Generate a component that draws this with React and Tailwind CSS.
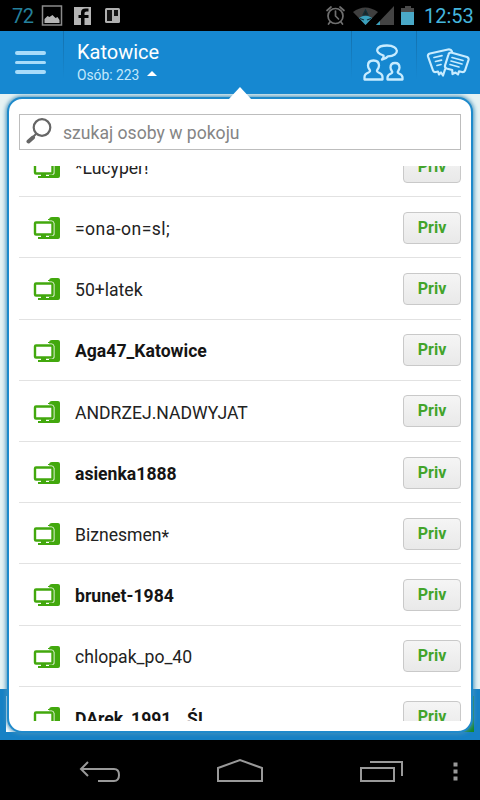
const people = [
  { name: "*Lucyper!" },
  { name: "=ona-on=sl;", wide: true },
  { name: "50+latek" },
  { name: "Aga47_Katowice", bold: true },
  { name: "ANDRZEJ.NADWYJAT" },
  { name: "asienka1888", bold: true },
  { name: "Biznesmen", starAfter: true },
  { name: "brunet-1984", bold: true },
  { name: "chlopak_po_40" },
  { name: "DArek_1991__ŚL", bold: true },
];

function StatusBar() {
  return (
    <div className="flex h-[31px] shrink-0 items-center bg-black pl-3 pr-[7px]">
      <span className="w-[29px] text-[20px] leading-[32px] tracking-[-0.500px] text-[#25809c]">72</span>
      <svg width="80" height="31" viewBox="0 0 80 31" fill="none">
        <rect x="1.500" y="6" width="19" height="19" stroke="#8b8b8b" strokeWidth="1.500" />
        <path d="M3.500 23v-4l3-3 2 1 3-2 3 3 2-1 2 3v3z" fill="#b5b5b5" />
        <rect x="33" y="7" width="17" height="18" fill="#b5b5b5" />
        <path d="M43.500 25v-7h4v-3h-4v-2q0-1.500 2-1.500h2v-3h-3q-4.500 0-4.500 4v2.500h-2.500v3H40v7z" fill="#050505" />
        <rect x="64" y="8" width="15" height="15" rx="1.500" fill="#b0b0b0" />
        <path d="M66 10h5v11h-5zM73 10h4v6h-4z" fill="#141414" />
      </svg>
      <svg className="ml-auto" width="92" height="31" viewBox="0 0 92 31" fill="none">
        <g stroke="#6f6f6f" strokeWidth="1.700" strokeLinecap="round">
          <circle cx="12.500" cy="16" r="7.500" />
          <path d="M12.500 11v5l3 3M4 10.500l4-3.500M21 10.500l-4-3.500M7 22l-1.500 2M18 22l1.500 2" />
        </g>
        <path d="M30 12q12-9 25 0L42.500 25z" fill="#3f3f3f" />
        <path d="M36 18q6.500-5 13 0L42.500 25z" fill="#3aa0bd" />
        <path d="M42.500 10l2.500 5h-5zM37 18.500l4 1.500M48 18.500l-4 1.500" fill="#222" stroke="#12303a" strokeWidth="1.200" />
        <path d="M71 6v19H53z" fill="#444" />
        <path d="M57 21v4h-4z" fill="#3aa0bd" />
        <path d="M82 6h6v2h3v17H78V8h4z" fill="#4a4a4a" />
        <path d="M78 12h13v13H78z" fill="#4aa9c8" />
      </svg>
      <span className="ml-[9px] w-[49px] text-[20px] leading-[32px] text-[#45b5dd]">12:53</span>
    </div>
  );
}

function Divider() {
  return <div className="h-12 w-px bg-gradient-to-b from-[#1370ac] to-[#1688d1]" />;
}

function Header() {
  return (
    <header className="flex h-[63px] shrink-0 bg-[#1688d1]">
      <div className="flex w-[63px] items-start pl-[15px] pt-5">
        <div className="flex w-[31px] flex-col gap-1.5">
          <span className="h-[3.500px] rounded-full bg-[#a8dcfa]" />
          <span className="h-[3.500px] rounded-full bg-[#a8dcfa]" />
          <span className="h-[3.500px] rounded-full bg-[#a8dcfa]" />
        </div>
      </div>
      <Divider />
      <div className="flex-1 pl-[13px] pt-[9px]">
        <h1 className="text-[20px] leading-6 text-white">Katowice</h1>
        <div className="flex items-center gap-2 text-[13.800px] leading-[22px] text-[#c3e8fc]">
          <span>Osób: 223</span>
          <span className="mb-1 border-x-[5px] border-b-[5px] border-x-transparent border-b-white" />
        </div>
      </div>
      <Divider />
      <svg className="w-16" height="63" viewBox="0 0 64 63" fill="none" stroke="#c8ecff" strokeWidth="2.300" strokeLinejoin="round">
        <path d="M30 28.500q2-1.500 1.500-4C21 21 24.500 14.500 35 14.500c13 0 13 10.500 1 10.800q-2 2.700-6 3.200z" />
        <path d="M12.500 48.500v-2.500q0-3 4-4.500 2.500-1 1-3-1.500-2-1.500-4 0-5 5.500-5t5.500 5q0 2-1.500 4-1.500 2 1 3 4 1.500 4 4.500v2.500z" />
        <path d="M35.500 48.500v-2q0-2.500 3.500-4 2-1 .8-2.500-1.300-2-1.300-3.500 0-4.500 4.500-4.500t4.500 4.500q0 1.500-1.300 3.500-1.200 1.500.8 2.500 3.500 1.500 3.500 4v2z" />
      </svg>
      <Divider />
      <svg className="w-[63px]" height="63" viewBox="0 0 63 63" fill="none" stroke="#c8ecff" strokeWidth="2.200" strokeLinejoin="round" strokeLinecap="round">
        <path d="M35 20.500q-1-2.500-4-2L13 22.500q-2.500.5-2 3l5 14q.5 2 3 1.500l2-.5 1 3 2-2 2 3 2-6" />
        <path d="M34 21.500l16 4.500q2 1 1.500 3l-3.500 10.500q-1 2-3 1.500l-3-.7-1 3.200-2.500-2-3 1.500-.3-4-5.700-1.500q-2-1-1.500-3l3.500-11q.5-2 2.500-2z" />
        <path d="M17 26.500l8-1.800M18.500 30.500l6-1.300M20 34.500l4-1M35 26.500l11 3M34 30l11 3M33 33.500l9 2.500" strokeWidth="1.700" />
      </svg>
    </header>
  );
}

function ComputerIcon() {
  return (
    <svg className="mt-0.5 shrink-0" width="28" height="24" viewBox="0 0 28 24">
      <path d="M16 4q0-3 3-3h6q2 0 2 2v18q0 2-2 2h-9z" fill="#42a80d" />
      <path d="M15 4.500h3.500q3 0 3 3V18q0 2-3 2H15" fill="#fff" />
      <path d="M15 3.500h3.500q3 0 3 3" fill="none" stroke="#42a80d" strokeWidth="1" />
      <rect x="2" y="6.500" width="17.500" height="12" rx="1" fill="#fff" stroke="#42a80d" strokeWidth="2.400" />
      <path d="M8 19h5v2h3v2H5v-2h3z" fill="#42a80d" />
    </svg>
  );
}

function PersonRow({ person }) {
  return (
    <li className="flex h-[61.200px] shrink-0 items-center border-b border-[#e2e2e2] pl-[14px]">
      <ComputerIcon />
      <span
        className={[
          "ml-3.5 mt-[4px] flex-1 text-[17.600px]",
          person.bold ? "font-bold text-[#151515]" : "text-[#222]",
          person.wide ? "tracking-[0.450px]" : "",
        ].join(" ")}
      >
        {person.name}
        {person.starAfter && <span className="relative top-[2px]">*</span>}
      </span>
      <button className="mt-px h-8 w-[58px] rounded-[4px] border border-[#c9c9c9] bg-gradient-to-b from-[#f5f5f5] to-[#e9e9e9] text-[16px] font-bold leading-7 text-[#42a42a]">
        Priv
      </button>
    </li>
  );
}

function PeoplePopup() {
  return (
    <section className="absolute left-[7px] top-[97px] flex h-[636px] w-[466px] flex-col rounded-[15px] border-2 border-[#1f8acb] bg-white px-[10px] pt-[15px] shadow-[0_0_4px_1px_#4390bb]">
      <svg className="absolute -top-3 left-[218px]" width="26" height="14" viewBox="0 0 26 14">
        <path d="M1 13L13 0l12 13z" fill="#fff" />
      </svg>
      <div className="flex h-9 shrink-0 items-center border border-[#bdbdbd] pl-1.5">
        <svg className="-mt-0.5" width="27" height="28" viewBox="0 0 27 28" fill="none" stroke="#666">
          <circle cx="16" cy="10.500" r="8.300" strokeWidth="2.200" />
          <path d="M10 17l-3 3" strokeWidth="2" />
          <path d="M7 20.500l-4.500 4" strokeWidth="4" strokeLinecap="round" />
        </svg>
        <input className="ml-2.5 mt-0.5 w-72 bg-transparent text-[17.600px] outline-none placeholder:text-[#858585]" placeholder="szukaj osoby w pokoju" />
      </div>
      <div className="mt-4 h-[555px] overflow-hidden">
        <ul className="-mt-[30px] flex flex-col">
          {people.map((person) => (
            <PersonRow key={person.name} person={person} />
          ))}
        </ul>
      </div>
    </section>
  );
}

function NavBar() {
  return (
    <nav className="h-[60px] shrink-0 bg-black">
      <svg width="480" height="60" viewBox="0 0 480 60" fill="none" stroke="#999" strokeWidth="2">
        <path d="M88 22l-7 7 7 7M81 29h33q5 0 5 6t-5 6H98" />
        <path d="M218 41V28l22-8 22 8v13z" />
        <path d="M361 28h33v13h-33zM370 22h32v14" />
        <path d="M453.500 22.500h4v4h-4zM453.500 29.500h4v4h-4zM453.500 36.500h4v4h-4z" fill="#999" stroke="none" />
      </svg>
    </nav>
  );
}

export default function App() {
  return (
    <div className="relative flex h-[800px] w-[480px] flex-col overflow-hidden bg-[#e6f2f3] font-[Roboto,sans-serif]">
      <StatusBar />
      <Header />
      <main className="flex-1" />
      <footer className="flex h-[51px] shrink-0 items-end justify-between bg-[#1681c5] px-1.5 pb-2">
        <div className="size-9 bg-white" />
        <div className="size-9 bg-[#168925]" />
      </footer>
      <NavBar />
      <PeoplePopup />
    </div>
  );
}
